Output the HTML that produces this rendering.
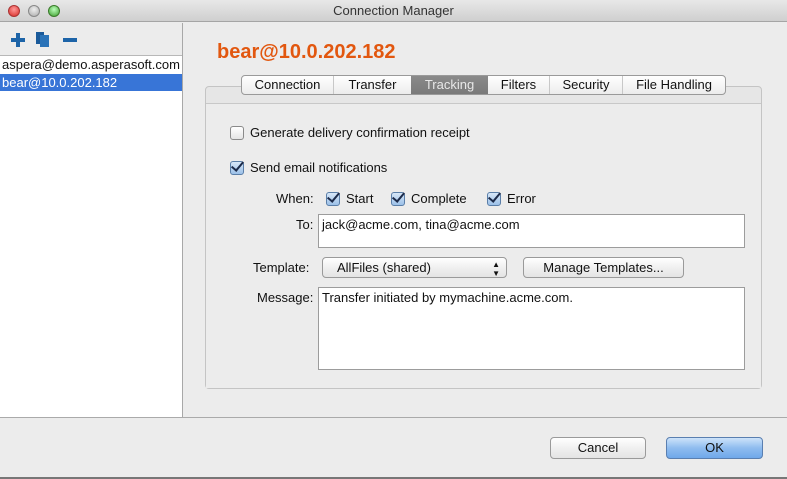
<!DOCTYPE html>
<html><head><style>
*{margin:0;padding:0;box-sizing:border-box}
body{width:787px;height:479px;overflow:hidden;background:#ececec;font-family:"Liberation Sans",sans-serif;font-size:13px;color:#111;position:relative}
.a{position:absolute}
.cb{position:absolute;width:14px;height:14px;border:1px solid #8a8a8a;border-radius:3px;background:linear-gradient(#fff,#e4e4e4)}
.cb.on{background:linear-gradient(#d7e7f8,#9cc0e8);border-color:#5a7ea8}
.cb.on::after{content:"";position:absolute;left:3px;top:-3px;width:5px;height:10px;border:solid #1c2b4a;border-width:0 2.5px 2.5px 0;transform:rotate(40deg)}
.btn{position:absolute;border:1px solid #9a9a9a;border-radius:4px;background:linear-gradient(#fff,#f0f0f0 50%,#e4e4e4);text-align:center}
.field{position:absolute;background:#fff;border:1px solid #9c9c9c;padding:2px 3px;font-size:13px}
</style></head><body>
<div class="a" style="left:0;top:0;width:787px;height:22px;background:linear-gradient(#e8e8e8,#cfcfcf);border-bottom:1px solid #a5a5a5;text-align:center;line-height:22px;color:#333">Connection Manager</div>
<div class="a" style="left:8px;top:5px;width:12px;height:12px;border-radius:50%;background:radial-gradient(circle at 50% 35%,#f99,#d62a24);border:1px solid #a33"></div>
<div class="a" style="left:28px;top:5px;width:12px;height:12px;border-radius:50%;background:radial-gradient(circle at 50% 35%,#eee,#aaa);border:1px solid #888"></div>
<div class="a" style="left:48px;top:5px;width:12px;height:12px;border-radius:50%;background:radial-gradient(circle at 50% 35%,#bfb,#3a9d2a);border:1px solid #3a7a2a"></div>
<!-- left panel -->
<div class="a" style="left:0;top:23px;width:183px;height:394px;border-right:1px solid #a8a8a8"></div>
<div class="a" style="left:11px;top:38px;width:14px;height:4px;background:#1d64a8"></div>
<div class="a" style="left:16px;top:33px;width:4px;height:14px;background:#1d64a8"></div>
<div class="a" style="left:36px;top:32px;width:8px;height:12px;background:#1a5a9a"></div>
<div class="a" style="left:40px;top:35px;width:9px;height:12px;background:#2a73b8"></div>
<div class="a" style="left:63px;top:38px;width:14px;height:4px;background:#1d64a8"></div>
<div class="a" style="left:0;top:55px;width:182px;height:362px;background:#fff;border-top:1px solid #b8b8b8"></div>
<div class="a" style="left:2px;top:57px;font-size:13px">aspera@demo.asperasoft.com</div>
<div class="a" style="left:0;top:74px;width:182px;height:17px;background:#3875d7;color:#fff;padding-left:2px;line-height:17px">bear@10.0.202.182</div>
<!-- right -->
<div class="a" style="left:217px;top:41px;color:#e2570f;font-weight:bold;font-size:20px">bear@10.0.202.182</div>
<div class="a" style="left:205px;top:86px;width:557px;height:303px;border:1px solid #c4c4c4;border-radius:4px;background:#e6e6e6"></div>
<div class="a" style="left:206px;top:103px;width:555px;height:285px;border-top:1px solid #c8c8c8;background:#ececec"></div>
<div class="a" style="left:241px;top:75px;width:485px;height:20px;border:1px solid #9a9a9a;border-radius:4px;background:linear-gradient(#fff,#ececec);display:flex;line-height:18px;overflow:hidden">
<div style="width:92px;text-align:center;border-right:1px solid #c8c8c8">Connection</div>
<div style="width:77px;text-align:center">Transfer</div>
<div style="width:77px;text-align:center;background:linear-gradient(#8a8a8a,#7a7a7a);color:#e8e8e8">Tracking</div>
<div style="width:62px;text-align:center;border-right:1px solid #c8c8c8">Filters</div>
<div style="width:73px;text-align:center;border-right:1px solid #c8c8c8">Security</div>
<div style="width:102px;text-align:center">File Handling</div>
</div>
<div class="cb" style="left:230px;top:126px"></div>
<div class="a" style="left:250px;top:125px">Generate delivery confirmation receipt</div>
<div class="cb on" style="left:230px;top:161px"></div>
<div class="a" style="left:250px;top:160px">Send email notifications</div>
<div class="a" style="left:276px;top:191px">When:</div>
<div class="cb on" style="left:326px;top:192px"></div><div class="a" style="left:346px;top:191px">Start</div>
<div class="cb on" style="left:391px;top:192px"></div><div class="a" style="left:411px;top:191px">Complete</div>
<div class="cb on" style="left:487px;top:192px"></div><div class="a" style="left:507px;top:191px">Error</div>
<div class="a" style="left:296px;top:217px">To:</div>
<div class="field" style="left:318px;top:214px;width:427px;height:34px">jack@acme.com, tina@acme.com</div>
<div class="a" style="left:253px;top:260px">Template:</div>
<div class="btn" style="left:322px;top:257px;width:185px;height:21px;text-align:left;padding-left:14px;line-height:19px">AllFiles (shared)<span style="position:absolute;right:6px;top:0;font-size:8px;line-height:9px;top:2px">▲<br>▼</span></div>
<div class="btn" style="left:523px;top:257px;width:161px;height:21px;line-height:19px">Manage Templates...</div>
<div class="a" style="left:257px;top:290px">Message:</div>
<div class="field" style="left:318px;top:287px;width:427px;height:83px">Transfer initiated by mymachine.acme.com.</div>
<div class="a" style="left:0;top:417px;width:787px;height:1px;background:#aaa"></div>
<div class="btn" style="left:550px;top:437px;width:96px;height:22px;line-height:20px">Cancel</div>
<div class="btn" style="left:666px;top:437px;width:97px;height:22px;line-height:20px;background:linear-gradient(#cde3fa,#8fbcef 50%,#6fa8ea);border-color:#5a7fb0">OK</div>
<div class="a" style="left:0;top:477px;width:787px;height:2px;background:#777"></div>
</body></html>
